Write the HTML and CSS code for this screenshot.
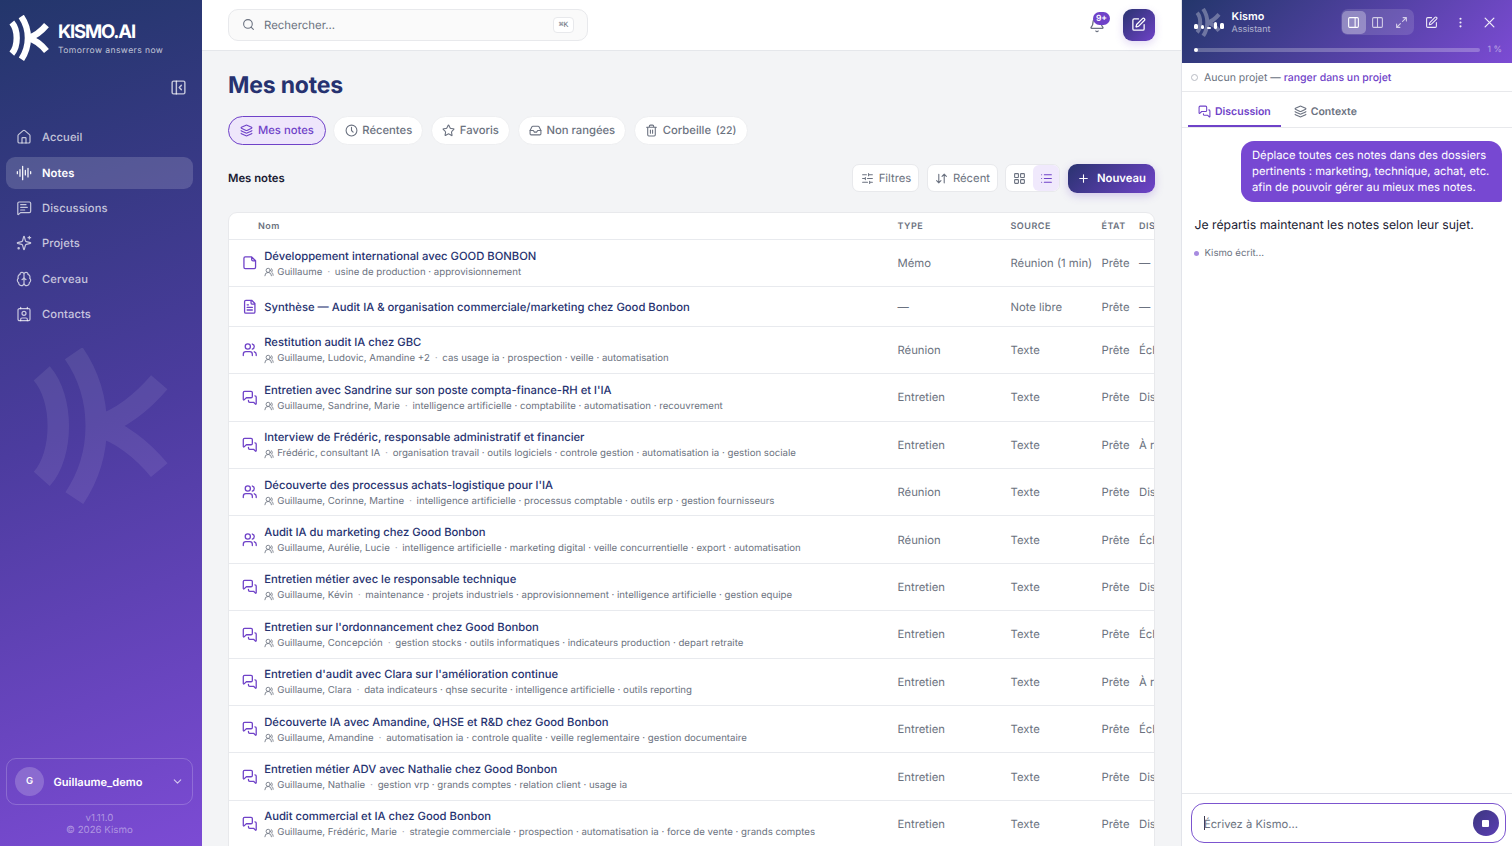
FILE: index.html
```html
<!DOCTYPE html>
<html lang="fr">
<head>
    <meta charset="UTF-8">
    <meta name="viewport" content="width=device-width, initial-scale=1.0">
    <title>Mes notes - Kismo.ai</title>
    <link rel="stylesheet" href="styles.css">
</head>
<body>
    <!-- Icônes -->
    <svg class="sprite">
        <symbol id="logo" viewBox="96 52 408 474"><g fill="none" stroke="currentColor" stroke-width="65"><path d="M123 129C190 205 190 375 123 450"/><path d="M220 68C311 200 311 375 222 508"/><path d="M290 290C360 272 430 215 480 156"/><path d="M290 290C360 305 430 362 480 423"/></g></symbol>
        <symbol id="house" viewBox="0 0 24 24"><path d="M15 21v-7a1 1 0 0 0-1-1h-4a1 1 0 0 0-1 1v7"/><path d="M3 10a2 2 0 0 1 .709-1.528l7-5.999a2 2 0 0 1 2.582 0l7 5.999A2 2 0 0 1 21 10v9a2 2 0 0 1-2 2H5a2 2 0 0 1-2-2z"/></symbol>
        <symbol id="audio" viewBox="0 0 24 24"><path d="M2 10v3M6 7v10M10 2v20M14 8v7M18 5v13M22 10v3"/></symbol>
        <symbol id="message" viewBox="0 0 24 24"><path d="M22 17a2 2 0 0 1-2 2H6.8l-2.9 2.6A.7.7 0 0 1 2.700 21V5a2 2 0 0 1 2-2H20a2 2 0 0 1 2 2zM7 11h10M7 15h6M7 7h8"/></symbol>
        <symbol id="sparkles" viewBox="0 0 24 24"><path d="M9.937 15.5A2 2 0 0 0 8.5 14.063l-6.135-1.582a.5.5 0 0 1 0-.962L8.5 9.936A2 2 0 0 0 9.937 8.5l1.582-6.135a.5.5 0 0 1 .963 0L14.063 8.5A2 2 0 0 0 15.5 9.937l6.135 1.581a.5.5 0 0 1 0 .964L15.5 14.063a2 2 0 0 0-1.437 1.437l-1.582 6.135a.5.5 0 0 1-.963 0zM20 2v4M22 4h-4"/><circle cx="4" cy="20" r="1"/></symbol>
        <symbol id="brain" viewBox="0 0 24 24"><path d="M12 5a3 3 0 1 0-5.997.125 4 4 0 0 0-2.526 5.77 4 4 0 0 0 .556 6.588A4 4 0 1 0 12 18ZM12 5a3 3 0 1 1 5.997.125 4 4 0 0 1 2.526 5.77 4 4 0 0 1-.556 6.588A4 4 0 1 1 12 18ZM15 13a4.500 4.500 0 0 1-3-4 4.500 4.500 0 0 1-3 4"/></symbol>
        <symbol id="contact" viewBox="0 0 24 24"><path d="M7 2v2M17 2v2M7 22v-2a2 2 0 0 1 2-2h6a2 2 0 0 1 2 2v2"/><rect x="3" y="4" width="18" height="18" rx="2"/><circle cx="12" cy="11" r="3"/></symbol>
        <symbol id="collapse" viewBox="0 0 24 24"><rect x="3" y="3" width="18" height="18" rx="2"/><path d="M9 3v18M16 15l-3-3 3-3"/></symbol>
        <symbol id="chevron" viewBox="0 0 24 24"><path d="m6 9 6 6 6-6"/></symbol>
        <symbol id="search" viewBox="0 0 24 24"><circle cx="11" cy="11" r="8"/><path d="m21 21-4.300-4.300"/></symbol>
        <symbol id="bell" viewBox="0 0 24 24"><path d="M10.300 21a2 2 0 0 0 3.400 0M6 8a6 6 0 0 1 12 0c0 4.500 1.400 6 2.700 7.300A1 1 0 0 1 20 17H4a1 1 0 0 1-.7-1.700C4.600 14 6 12.500 6 8"/></symbol>
        <symbol id="pen" viewBox="0 0 24 24"><path d="M12 3H5a2 2 0 0 0-2 2v14a2 2 0 0 0 2 2h14a2 2 0 0 0 2-2v-7"/><path d="M18.375 2.625a1 1 0 0 1 3 3l-9.013 9.014a2 2 0 0 1-.853.505l-2.873.84a.5.5 0 0 1-.62-.62l.84-2.873a2 2 0 0 1 .506-.852z"/></symbol>
        <symbol id="layers" viewBox="0 0 24 24"><path d="M12.830 2.180a2 2 0 0 0-1.660 0L2.600 6.080a1 1 0 0 0 0 1.830l8.580 3.910a2 2 0 0 0 1.660 0l8.580-3.900a1 1 0 0 0 0-1.830zM2 12a1 1 0 0 0 .58.91l8.600 3.910a2 2 0 0 0 1.650 0l8.580-3.900A1 1 0 0 0 22 12M2 17a1 1 0 0 0 .58.91l8.600 3.910a2 2 0 0 0 1.650 0l8.580-3.900A1 1 0 0 0 22 17"/></symbol>
        <symbol id="clock" viewBox="0 0 24 24"><circle cx="12" cy="12" r="10"/><path d="M12 6v6l3 3"/></symbol>
        <symbol id="star" viewBox="0 0 24 24"><path d="M11.500 2.300a.5.5 0 0 1 1 0l2.300 4.700a2 2 0 0 0 1.600 1.200l5.200.7a.5.5 0 0 1 .3.900l-3.700 3.700a2 2 0 0 0-.6 1.900l.9 5.100a.5.5 0 0 1-.8.600l-4.600-2.500a2 2 0 0 0-2 0l-4.700 2.500a.5.5 0 0 1-.7-.6l.9-5.100a2 2 0 0 0-.6-1.900L2.200 9.800a.5.5 0 0 1 .3-.9l5.100-.7A2 2 0 0 0 9.200 7z"/></symbol>
        <symbol id="inbox" viewBox="0 0 24 24"><path d="M22 12h-6l-2 3h-4l-2-3H2"/><path d="M5.450 5.110 2 12v6a2 2 0 0 0 2 2h16a2 2 0 0 0 2-2v-6l-3.450-6.890A2 2 0 0 0 16.760 4H7.240a2 2 0 0 0-1.790 1.110z"/></symbol>
        <symbol id="trash" viewBox="0 0 24 24"><path d="M3 6h18M19 6v14a2 2 0 0 1-2 2H7a2 2 0 0 1-2-2V6M8 6V4a2 2 0 0 1 2-2h4a2 2 0 0 1 2 2v2M10 11v6M14 11v6"/></symbol>
        <symbol id="sliders" viewBox="0 0 24 24"><path d="M10 5H3M12 19H3M14 3v4M16 17v4M21 12h-9M21 19h-5M21 5h-7M8 10v4M8 12H3"/></symbol>
        <symbol id="sort" viewBox="0 0 24 24"><path d="m3 16 4 4 4-4M7 20V4M21 8l-4-4-4 4M17 4v16"/></symbol>
        <symbol id="grid" viewBox="0 0 24 24"><rect x="3" y="3" width="7" height="7" rx="1"/><rect x="14" y="3" width="7" height="7" rx="1"/><rect x="3" y="14" width="7" height="7" rx="1"/><rect x="14" y="14" width="7" height="7" rx="1"/></symbol>
        <symbol id="list" viewBox="0 0 24 24"><path d="M3 5h.01M3 12h.01M3 19h.01M8 5h13M8 12h13M8 19h13"/></symbol>
        <symbol id="plus" viewBox="0 0 24 24"><path d="M5 12h14M12 5v14"/></symbol>
        <symbol id="memo" viewBox="0 0 24 24"><path d="M15 3H5a2 2 0 0 0-2 2v14a2 2 0 0 0 2 2h14a2 2 0 0 0 2-2V9zM15 3v4a2 2 0 0 0 2 2h4"/></symbol>
        <symbol id="file" viewBox="0 0 24 24"><path d="M15 2H6a2 2 0 0 0-2 2v16a2 2 0 0 0 2 2h12a2 2 0 0 0 2-2V7zM14 2v4a2 2 0 0 0 2 2h4M10 9H8M16 13H8M16 17H8"/></symbol>
        <symbol id="users" viewBox="0 0 24 24"><path d="M16 21v-2a4 4 0 0 0-4-4H6a4 4 0 0 0-4 4v2M22 21v-2a4 4 0 0 0-3-3.870M16 3.130a4 4 0 0 1 0 7.750"/><circle cx="9" cy="7" r="4"/></symbol>
        <symbol id="people" viewBox="0 0 24 24"><path d="M18 21a8 8 0 0 0-16 0M22 20c0-3.370-2-6.500-4-8a5 5 0 0 0-.45-8.300"/><circle cx="10" cy="8" r="5"/></symbol>
        <symbol id="chat" viewBox="0 0 24 24"><path d="M16 10a2 2 0 0 1-2 2H6.800l-3.600 3.300A.7.7 0 0 1 2 14.800V4a2 2 0 0 1 2-2h10a2 2 0 0 1 2 2zM20 9a2 2 0 0 1 2 2v10.300a.7.7 0 0 1-1.200.5L18 19h-6a2 2 0 0 1-2-2v-1"/></symbol>
        <symbol id="panel" viewBox="0 0 24 24"><rect x="3" y="3" width="18" height="18" rx="2"/><path d="M15 3v18"/></symbol>
        <symbol id="columns" viewBox="0 0 24 24"><rect x="3" y="3" width="18" height="18" rx="2"/><path d="M12 3v18"/></symbol>
        <symbol id="expand" viewBox="0 0 24 24"><path d="M15 3h6v6M21 3l-7 7M3 21l7-7M9 21H3v-6"/></symbol>
        <symbol id="dots" viewBox="0 0 24 24"><circle cx="12" cy="12" r="1"/><circle cx="12" cy="5" r="1"/><circle cx="12" cy="19" r="1"/></symbol>
        <symbol id="close" viewBox="0 0 24 24"><path d="M19 5 5 19M5 5l14 14"/></symbol>
    </svg>

    <div class="app">
        <!-- Menu latéral -->
        <aside class="sidebar">
            <div class="brand">
                <svg class="brand-logo"><use href="#logo"/></svg>
                <div>
                    <div class="brand-name">KISMO.AI</div>
                    <div class="brand-tagline">Tomorrow answers now</div>
                </div>
            </div>
            <button class="collapse-btn"><svg class="icon"><use href="#collapse"/></svg></button>
            <nav class="nav">
                <a class="nav-item"><svg class="icon"><use href="#house"/></svg><span>Accueil</span></a>
                <a class="nav-item active"><svg class="icon"><use href="#audio"/></svg><span>Notes</span></a>
                <a class="nav-item"><svg class="icon"><use href="#message"/></svg><span>Discussions</span></a>
                <a class="nav-item"><svg class="icon"><use href="#sparkles"/></svg><span>Projets</span></a>
                <a class="nav-item"><svg class="icon"><use href="#brain"/></svg><span>Cerveau</span></a>
                <a class="nav-item"><svg class="icon"><use href="#contact"/></svg><span>Contacts</span></a>
            </nav>
            <svg class="watermark"><use href="#logo"/></svg>
            <div class="user-card">
                <div class="avatar">G</div>
                <span class="user-name">Guillaume_demo</span>
                <svg class="icon"><use href="#chevron"/></svg>
            </div>
            <div class="version">v1.11.0<br>© 2026 Kismo</div>
        </aside>

        <!-- Contenu principal -->
        <main class="main">
            <header class="topbar">
                <div class="search">
                    <svg class="icon"><use href="#search"/></svg>
                    <span class="search-text">Rechercher...</span>
                    <kbd>⌘K</kbd>
                </div>
                <div class="topbar-actions">
                    <div class="bell"><svg class="icon"><use href="#bell"/></svg><span class="badge">9+</span></div>
                    <button class="compose"><svg class="icon"><use href="#pen"/></svg></button>
                </div>
            </header>

            <div class="content">
                <h1>Mes notes</h1>
                <div class="tabs">
                    <button class="tab active"><svg class="icon"><use href="#layers"/></svg><span>Mes notes</span></button>
                    <button class="tab"><svg class="icon"><use href="#clock"/></svg><span>Récentes</span></button>
                    <button class="tab"><svg class="icon"><use href="#star"/></svg><span>Favoris</span></button>
                    <button class="tab"><svg class="icon"><use href="#inbox"/></svg><span>Non rangées</span></button>
                    <button class="tab"><svg class="icon"><use href="#trash"/></svg><span>Corbeille</span><small>(22)</small></button>
                </div>

                <div class="toolbar">
                    <h2>Mes notes</h2>
                    <button class="tool filter"><svg class="icon"><use href="#sliders"/></svg><span>Filtres</span></button>
                    <button class="tool order"><svg class="icon"><use href="#sort"/></svg><span>Récent</span></button>
                    <div class="view-switch">
                        <button><svg class="icon"><use href="#grid"/></svg></button>
                        <button class="active"><svg class="icon"><use href="#list"/></svg></button>
                    </div>
                    <button class="new-btn"><svg class="icon"><use href="#plus"/></svg><span>Nouveau</span></button>
                </div>

                <!-- Liste des notes -->
                <div class="table">
                    <div class="row head">
                        <div class="head-name">Nom</div><div>TYPE</div><div>SOURCE</div><div>ÉTAT</div><div>DISCUSSION</div>
                    </div>
                    <div class="row">
                        <div class="note"><svg class="icon"><use href="#memo"/></svg><div>
                            <div class="note-title">Développement international avec GOOD BONBON</div>
                            <div class="note-meta"><svg class="icon"><use href="#people"/></svg><span>Guillaume</span><i>·</i><span>usine de production · approvisionnement</span></div>
                        </div></div>
                        <div>Mémo</div><div>Réunion (1 min)</div><div>Prête</div><div>—</div>
                    </div>
                    <div class="row short">
                        <div class="note"><svg class="icon"><use href="#file"/></svg><div>
                            <div class="note-title">Synthèse — Audit IA &amp; organisation commerciale/marketing chez Good Bonbon</div>
                        </div></div>
                        <div>—</div><div>Note libre</div><div>Prête</div><div>—</div>
                    </div>
                    <div class="row">
                        <div class="note"><svg class="icon"><use href="#users"/></svg><div>
                            <div class="note-title">Restitution audit IA chez GBC</div>
                            <div class="note-meta"><svg class="icon"><use href="#people"/></svg><span>Guillaume, Ludovic, Amandine +2</span><i>·</i><span>cas usage ia · prospection · veille · automatisation</span></div>
                        </div></div>
                        <div>Réunion</div><div>Texte</div><div>Prête</div><div>Échange</div>
                    </div>
                    <div class="row">
                        <div class="note"><svg class="icon"><use href="#chat"/></svg><div>
                            <div class="note-title">Entretien avec Sandrine sur son poste compta-finance-RH et l'IA</div>
                            <div class="note-meta"><svg class="icon"><use href="#people"/></svg><span>Guillaume, Sandrine, Marie</span><i>·</i><span>intelligence artificielle · comptabilite · automatisation · recouvrement</span></div>
                        </div></div>
                        <div>Entretien</div><div>Texte</div><div>Prête</div><div>Discussion</div>
                    </div>
                    <div class="row">
                        <div class="note"><svg class="icon"><use href="#chat"/></svg><div>
                            <div class="note-title">Interview de Frédéric, responsable administratif et financier</div>
                            <div class="note-meta"><svg class="icon"><use href="#people"/></svg><span>Frédéric, consultant IA</span><i>·</i><span>organisation travail · outils logiciels · controle gestion · automatisation ia · gestion sociale</span></div>
                        </div></div>
                        <div>Entretien</div><div>Texte</div><div>Prête</div><div>À reprendre</div>
                    </div>
                    <div class="row">
                        <div class="note"><svg class="icon"><use href="#users"/></svg><div>
                            <div class="note-title">Découverte des processus achats-logistique pour l'IA</div>
                            <div class="note-meta"><svg class="icon"><use href="#people"/></svg><span>Guillaume, Corinne, Martine</span><i>·</i><span>intelligence artificielle · processus comptable · outils erp · gestion fournisseurs</span></div>
                        </div></div>
                        <div>Réunion</div><div>Texte</div><div>Prête</div><div>Discussion</div>
                    </div>
                    <div class="row">
                        <div class="note"><svg class="icon"><use href="#users"/></svg><div>
                            <div class="note-title">Audit IA du marketing chez Good Bonbon</div>
                            <div class="note-meta"><svg class="icon"><use href="#people"/></svg><span>Guillaume, Aurélie, Lucie</span><i>·</i><span>intelligence artificielle · marketing digital · veille concurrentielle · export · automatisation</span></div>
                        </div></div>
                        <div>Réunion</div><div>Texte</div><div>Prête</div><div>Échange</div>
                    </div>
                    <div class="row">
                        <div class="note"><svg class="icon"><use href="#chat"/></svg><div>
                            <div class="note-title">Entretien métier avec le responsable technique</div>
                            <div class="note-meta"><svg class="icon"><use href="#people"/></svg><span>Guillaume, Kévin</span><i>·</i><span>maintenance · projets industriels · approvisionnement · intelligence artificielle · gestion equipe</span></div>
                        </div></div>
                        <div>Entretien</div><div>Texte</div><div>Prête</div><div>Discussion</div>
                    </div>
                    <div class="row">
                        <div class="note"><svg class="icon"><use href="#chat"/></svg><div>
                            <div class="note-title">Entretien sur l'ordonnancement chez Good Bonbon</div>
                            <div class="note-meta"><svg class="icon"><use href="#people"/></svg><span>Guillaume, Concepción</span><i>·</i><span>gestion stocks · outils informatiques · indicateurs production · depart retraite</span></div>
                        </div></div>
                        <div>Entretien</div><div>Texte</div><div>Prête</div><div>Échange</div>
                    </div>
                    <div class="row">
                        <div class="note"><svg class="icon"><use href="#chat"/></svg><div>
                            <div class="note-title">Entretien d'audit avec Clara sur l'amélioration continue</div>
                            <div class="note-meta"><svg class="icon"><use href="#people"/></svg><span>Guillaume, Clara</span><i>·</i><span>data indicateurs · qhse securite · intelligence artificielle · outils reporting</span></div>
                        </div></div>
                        <div>Entretien</div><div>Texte</div><div>Prête</div><div>À reprendre</div>
                    </div>
                    <div class="row">
                        <div class="note"><svg class="icon"><use href="#chat"/></svg><div>
                            <div class="note-title">Découverte IA avec Amandine, QHSE et R&amp;D chez Good Bonbon</div>
                            <div class="note-meta"><svg class="icon"><use href="#people"/></svg><span>Guillaume, Amandine</span><i>·</i><span>automatisation ia · controle qualite · veille reglementaire · gestion documentaire</span></div>
                        </div></div>
                        <div>Entretien</div><div>Texte</div><div>Prête</div><div>Échange</div>
                    </div>
                    <div class="row">
                        <div class="note"><svg class="icon"><use href="#chat"/></svg><div>
                            <div class="note-title">Entretien métier ADV avec Nathalie chez Good Bonbon</div>
                            <div class="note-meta"><svg class="icon"><use href="#people"/></svg><span>Guillaume, Nathalie</span><i>·</i><span>gestion vrp · grands comptes · relation client · usage ia</span></div>
                        </div></div>
                        <div>Entretien</div><div>Texte</div><div>Prête</div><div>Discussion</div>
                    </div>
                    <div class="row">
                        <div class="note"><svg class="icon"><use href="#chat"/></svg><div>
                            <div class="note-title">Audit commercial et IA chez Good Bonbon</div>
                            <div class="note-meta"><svg class="icon"><use href="#people"/></svg><span>Guillaume, Frédéric, Marie</span><i>·</i><span>strategie commerciale · prospection · automatisation ia · force de vente · grands comptes</span></div>
                        </div></div>
                        <div>Entretien</div><div>Texte</div><div>Prête</div><div>Discussion</div>
                    </div>
                </div>
            </div>
        </main>

        <!-- Assistant -->
        <section class="assistant">
            <header class="assistant-head">
                <div class="assistant-top">
                    <div class="assistant-logo">
                        <svg><use href="#logo"/></svg>
                        <div class="bars"><b></b><b class="low"></b><b class="tiny"></b><b class="high"></b><b class="mid"></b></div>
                    </div>
                    <div class="assistant-title">
                        <strong>Kismo</strong>
                        <span>Assistant</span>
                    </div>
                    <div class="layout-switch">
                        <button class="active"><svg class="icon"><use href="#panel"/></svg></button>
                        <button><svg class="icon"><use href="#columns"/></svg></button>
                        <button><svg class="icon"><use href="#expand"/></svg></button>
                    </div>
                    <button class="head-btn"><svg class="icon"><use href="#pen"/></svg></button>
                    <button class="head-btn"><svg class="icon"><use href="#dots"/></svg></button>
                    <button class="head-btn"><svg class="icon big"><use href="#close"/></svg></button>
                </div>
                <div class="usage"><div class="usage-track"><div class="usage-fill" style="width: 1%"></div></div><span>1 %</span></div>
            </header>
            <div class="project"><span class="ring"></span><span>Aucun projet — <a>ranger dans un projet</a></span></div>
            <div class="assistant-tabs">
                <div class="assistant-tab active"><svg class="icon"><use href="#chat"/></svg><span>Discussion</span></div>
                <div class="assistant-tab"><svg class="icon"><use href="#layers"/></svg><span>Contexte</span></div>
            </div>
            <div class="messages">
                <div class="bubble">Déplace toutes ces notes dans des dossiers<br>pertinents : marketing, technique, achat, etc.<br>afin de pouvoir gérer au mieux mes notes.</div>
                <p class="answer">Je répartis maintenant les notes selon leur sujet.</p>
                <div class="typing"><span class="dot"></span>Kismo écrit...</div>
            </div>
            <footer class="composer">
                <div class="composer-box">
                    <span class="caret"></span>
                    <span class="placeholder">Écrivez à Kismo...</span>
                    <button class="stop"><span></span></button>
                </div>
            </footer>
        </section>
    </div>
</body>
</html>
```
FILE: styles.css
```css
* {
    box-sizing: border-box;
}
body {
    margin: 0;
    font-family: Inter, "Liberation Sans", sans-serif;
    font-size: 11.5px;
    color: #6b7280;
    background-color: #f3f4f6;
    text-rendering: geometricPrecision;
    overflow: hidden;
}
button {
    font: inherit;
    color: inherit;
    padding: 0;
    border: none;
    background: none;
    display: flex;
    align-items: center;
    justify-content: center;
    text-rendering: inherit;
}
.sprite {
    display: none;
}
.icon {
    width: 13px;
    height: 13px;
    flex: none;
    fill: none;
    stroke: currentColor;
    stroke-width: 2;
    stroke-linecap: round;
    stroke-linejoin: round;
}
.app {
    display: grid;
    grid-template-columns: 202.4px 979.6px 1fr;
    height: 846px;
}

/* Menu latéral */
.sidebar {
    height: 846px;
    display: flex;
    flex-direction: column;
    padding: 15px 9.5px 0 6px;
    background: linear-gradient(160deg, #23366b 0%, #4c3c9f 50%, #7c4bd4 100%);
    color: rgba(255, 255, 255, 0.72);
}
.brand {
    display: flex;
    gap: 9px;
    padding-left: 3px;
    height: 46px;
    color: #fff;
}
.brand-logo {
    width: 40px;
    height: 46px;
}
.brand-name {
    margin-top: 6px;
    font-size: 18.5px;
    line-height: 23px;
    font-weight: 700;
    letter-spacing: -1.2px;
}
.brand-tagline {
    margin-top: 1px;
    font-size: 8.6px;
    line-height: 12px;
    letter-spacing: 0.4px;
    color: rgba(255, 255, 255, 0.7);
    white-space: nowrap;
}
.collapse-btn {
    align-self: flex-end;
    margin: 18px 6px 0 0;
}
.collapse-btn .icon {
    width: 17px;
    height: 17px;
}
.nav {
    display: flex;
    flex-direction: column;
    gap: 3.4px;
    margin-top: 25.3px;
}
.nav-item {
    display: flex;
    align-items: center;
    gap: 10px;
    height: 32px;
    padding-left: 10px;
    border-radius: 9px;
    font-size: 11.2px;
    font-weight: 500;
    letter-spacing: 0.1px;
}
.nav-item .icon {
    width: 16px;
    height: 16px;
    stroke-width: 1.8;
}
.nav-item.active {
    background-color: rgba(255, 255, 255, 0.16);
    color: #fff;
    font-weight: 600;
}
.watermark {
    width: 136px;
    height: 156px;
    margin: 18px 0 0 25.5px;
    flex: none;
    color: rgb(255, 255, 255);
    opacity: 0.08;
}
.user-card {
    display: flex;
    align-items: center;
    height: 47px;
    margin-top: auto;
    padding: 0 8px;
    border: 1px solid rgba(255, 255, 255, 0.2);
    border-radius: 10px;
    color: #fff;
}
.avatar {
    width: 29px;
    height: 29px;
    border-radius: 50%;
    background-color: rgba(255, 255, 255, 0.2);
    font-size: 9.5px;
    font-weight: 600;
    line-height: 29px;
    text-align: center;
}
.user-name {
    flex: 1;
    margin-left: 9.5px;
    font-size: 11.1px;
    font-weight: 600;
}
.user-card .icon {
    opacity: 0.7;
}
.version {
    margin: 7.5px 0 8px;
    font-size: 9.7px;
    line-height: 12.7px;
    text-align: center;
    color: rgba(255, 255, 255, 0.42);
}

/* Barre du haut */
.main {
    height: 846px;
    overflow: hidden;
    border-right: 1px solid #e2e4ea;
}
.topbar {
    display: flex;
    align-items: center;
    justify-content: space-between;
    height: 51px;
    padding: 0 26px 1px 25.6px;
    background-color: #fff;
    border-bottom: 1px solid #e5e7eb;
}
.search {
    display: flex;
    align-items: center;
    width: 360px;
    height: 32px;
    padding: 0 13px;
    border: 1px solid #e8e9ec;
    border-radius: 10px;
    background-color: #fafafa;
}
.search-text {
    flex: 1;
    margin-left: 9px;
    font-size: 11.4px;
}
kbd {
    width: 21px;
    height: 16px;
    border: 1px solid #e8e9ec;
    border-radius: 4px;
    background-color: #fff;
    font-family: "Liberation Mono", monospace;
    font-size: 8px;
    line-height: 15px;
    text-align: center;
}
.topbar-actions {
    display: flex;
    align-items: center;
    gap: 18px;
}
.bell {
    position: relative;
    height: 16px;
}
.bell .icon {
    width: 16px;
    height: 16px;
}
.badge {
    position: absolute;
    left: 4px;
    top: -5px;
    width: 17px;
    height: 13px;
    border-radius: 7px;
    background-color: #6f42c8;
    color: #fff;
    font-size: 8.5px;
    font-weight: 600;
    line-height: 14px;
    text-align: center;
}
.compose {
    width: 32px;
    height: 32px;
    border-radius: 9px;
    background: linear-gradient(135deg, #2a3370, #6f42c8);
    box-shadow: 0 3px 8px rgba(111, 66, 200, 0.2);
    color: #fff;
}
.compose .icon {
    width: 15px;
    height: 15px;
}

/* Contenu */
.content {
    padding: 19px 26px 0 25.6px;
}
h1 {
    margin: 0;
    font-size: 23px;
    line-height: 30px;
    font-weight: 700;
    letter-spacing: -0.2px;
    color: #263270;
}
.tabs {
    display: flex;
    gap: 7.5px;
    margin-top: 16px;
}
.tab {
    height: 28.5px;
    padding: 0 10.2px;
    gap: 4.7px;
    border: 1px solid #eeeff1;
    border-radius: 15px;
    background-color: #fff;
    font-size: 11.25px;
    font-weight: 500;
}
.tab small {
    font-size: 10.5px;
}
.tab.active {
    padding: 0 11px;
    gap: 5px;
    border-color: #6f42c8;
    background-color: #eee6fb;
    color: #6f42c8;
}
.toolbar {
    display: flex;
    align-items: center;
    height: 29px;
    margin-top: 19px;
}
h2 {
    flex: 1;
    margin: 0;
    font-size: 11.3px;
    font-weight: 600;
    color: #1a1b33;
}
.tool {
    height: 28px;
    margin-right: 7.5px;
    gap: 5px;
    border: 1px solid #e8e9ec;
    border-radius: 7px;
    background-color: #fff;
    font-size: 11.3px;
}
.filter {
    width: 67px;
}
.order {
    width: 71px;
}
.view-switch {
    display: flex;
    width: 55px;
    height: 28px;
    margin-right: 7.5px;
    border: 1px solid #e8e9ec;
    border-radius: 7px;
    background-color: #fff;
}
.view-switch button {
    flex: 1;
    border-radius: 6px;
}
.view-switch .active {
    background-color: #f0e9fc;
    color: #6f42c8;
}
.new-btn {
    width: 87px;
    height: 29px;
    gap: 7px;
    border-radius: 9px;
    background: linear-gradient(135deg, #2a3370, #6f42c8);
    box-shadow: 0 3px 8px rgba(111, 66, 200, 0.25);
    color: #fff;
    font-size: 11.3px;
    font-weight: 600;
}

/* Liste */
.table {
    height: 660px;
    margin-top: 19.5px;
    border: 1px solid #e8e9ec;
    border-radius: 9px;
    background-color: #fff;
    overflow: hidden;
}
.row {
    display: grid;
    grid-template-columns: 668.5px 113px 91px 37.5px 90px;
    align-items: center;
    width: 1000px;
    height: 47.42px;
    border-bottom: 1px solid #e8eaee;
    font-size: 11.3px;
    white-space: nowrap;
}
.row.short {
    height: 39.3px;
}
.row.head {
    height: 27px;
    padding-top: 1px;
    font-size: 9px;
    font-weight: 600;
    letter-spacing: 0.5px;
}
.head-name {
    padding-left: 29px;
}
.note {
    display: flex;
    align-items: center;
    gap: 6.7px;
    padding-left: 13px;
}
.note > .icon {
    width: 15.5px;
    height: 15.5px;
    color: #6f42c8;
}
.note-title {
    padding-top: 1px;
    font-size: 11.25px;
    line-height: 16px;
    font-weight: 500;
    color: #263270;
}
.note-meta {
    display: flex;
    align-items: center;
    height: 16px;
    padding-top: 1px;
    font-size: 9.67px;
}
.note-meta .icon {
    width: 10px;
    height: 10px;
    margin-right: 3px;
}
.note-meta i {
    width: 12.5px;
    text-align: center;
    opacity: 0.6;
}

/* Assistant */
.assistant {
    display: flex;
    flex-direction: column;
    height: 846px;
    background-color: #fff;
}
.assistant-head {
    height: 62.5px;
    padding: 7px 10px 0 12.5px;
    background: linear-gradient(135deg, #23366b 0%, #7c4bd4 100%);
    color: #fff;
}
.assistant-top {
    display: flex;
    align-items: center;
    height: 30px;
}
.assistant-logo {
    position: relative;
    width: 29px;
    height: 29px;
}
.assistant-logo svg {
    width: 28px;
    height: 29px;
    opacity: 0.3;
}
.bars {
    position: absolute;
    left: 0;
    top: 12px;
    display: flex;
    align-items: flex-end;
    justify-content: space-between;
    width: 29.5px;
    height: 9px;
}
.bars b {
    width: 3.5px;
    height: 5px;
    border-radius: 1.5px;
    background-color: #fff;
}
.bars .low {
    height: 4px;
}
.bars .tiny {
    height: 2px;
}
.bars .high {
    height: 7px;
}
.bars .mid {
    height: 6px;
}
.assistant-title {
    flex: 1;
    margin-left: 8px;
}
.assistant-title strong {
    display: block;
    margin-top: 1px;
    font-size: 10.8px;
    line-height: 13px;
    font-weight: 600;
}
.assistant-title span {
    display: block;
    margin-top: 1px;
    font-size: 9px;
    line-height: 12px;
    opacity: 0.6;
}
.layout-switch {
    display: flex;
    align-items: center;
    width: 73px;
    height: 26px;
    margin-right: 6px;
    padding: 1px;
    border-radius: 7px;
    background-color: rgba(255, 255, 255, 0.13);
}
.layout-switch button {
    width: 24px;
    height: 23px;
    border-radius: 5px;
    opacity: 0.7;
}
.layout-switch .active {
    background-color: rgba(255, 255, 255, 0.3);
    opacity: 1;
}
.head-btn {
    width: 23px;
    opacity: 0.9;
}
.head-btn + .head-btn {
    margin-left: 6px;
}
.assistant-top .head-btn:last-child {
    margin-right: 1px;
}
.head-btn .big {
    width: 15px;
    height: 15px;
}
.usage {
    display: flex;
    align-items: center;
    gap: 7px;
    height: 12px;
    margin-top: 7px;
    font-size: 8.7px;
    color: rgba(255, 255, 255, 0.5);
    white-space: nowrap;
}
.usage-track {
    width: 286px;
    height: 3.5px;
    border-radius: 2px;
    background-color: rgba(255, 255, 255, 0.25);
}
.usage-fill {
    min-width: 4px;
    height: 3.5px;
    border-radius: 2px;
    background-color: #fff;
}
.project {
    display: flex;
    align-items: center;
    gap: 6px;
    height: 29.5px;
    padding: 1px 0 0 9px;
    border-bottom: 1px solid #e8e9ec;
    font-size: 10.5px;
}
.project a {
    color: #6f42c8;
    font-weight: 500;
}
.ring {
    width: 7px;
    height: 7px;
    flex: none;
    border: 1px solid #b9bcc4;
    border-radius: 50%;
}
.assistant-tabs {
    display: flex;
    height: 36px;
    padding-left: 6px;
    border-bottom: 1px solid #e8e9ec;
    font-weight: 600;
    font-size: 10.5px;
}
.assistant-tab {
    display: flex;
    align-items: center;
    gap: 4px;
    height: 35px;
    padding: 5px 10px 0;
    border-bottom: 2px solid transparent;
}
.assistant-tab + .assistant-tab {
    margin-left: 3px;
}
.assistant-tab.active {
    border-color: #6f42c8;
    color: #6f42c8;
}
.messages {
    flex: 1;
    padding: 12.5px 10px 0 12.5px;
}
.bubble {
    width: 261px;
    height: 61px;
    margin-left: auto;
    padding: 6.4px 11px;
    border-radius: 13px 13px 2px 13px;
    background-color: #7748d2;
    color: #fff;
    font-size: 11.25px;
    line-height: 16px;
    white-space: nowrap;
}
.answer {
    margin: 13px 0 0;
    font-size: 12.22px;
    line-height: 19px;
    color: #1a1b33;
    white-space: nowrap;
}
.typing {
    display: flex;
    align-items: center;
    gap: 5px;
    margin-top: 14px;
    font-size: 9.6px;
}
.dot {
    width: 5px;
    height: 5px;
    border-radius: 50%;
    background-color: #a78be0;
}
.composer {
    height: 53px;
    padding: 9px 6.5px 0 9px;
    border-top: 1px solid #e5e7eb;
}
.composer-box {
    display: flex;
    align-items: center;
    height: 40px;
    padding: 0 6px 0 12px;
    border: 1px solid #7c55cf;
    border-radius: 13px;
}
.caret {
    width: 1px;
    height: 14px;
    margin-right: -1px;
    background-color: #3a3b52;
}
.placeholder {
    flex: 1;
    padding-top: 1px;
    font-size: 11.2px;
}
.stop {
    width: 26px;
    height: 26px;
    border-radius: 50%;
    background: linear-gradient(135deg, #3c367f, #5b3fb4);
}
.stop span {
    width: 7px;
    height: 7px;
    border-radius: 1px;
    background-color: #fff;
}
```
